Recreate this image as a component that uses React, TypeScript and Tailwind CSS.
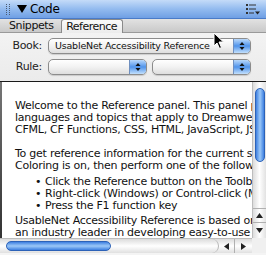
import React from "react";

const font = { fontFamily: '"DejaVu Sans", Verdana, sans-serif' };

function Arrows() {
  return (
    <svg width="6" height="10" viewBox="0 0 6 10">
      <path d="M3 1 L5.5 4 L0.5 4 Z" fill="#111" />
      <path d="M3 9 L5.5 6 L0.5 6 Z" fill="#111" />
    </svg>
  );
}

function AquaSelect({ label, className }: { label?: string; className: string }) {
  return (
    <div
      className={`h-[16px] flex rounded-[5px] border border-[#8c8c8c] bg-gradient-to-b from-white via-[#f2f2f2] to-[#dedede] overflow-hidden shadow-[0_1px_1px_rgba(0,0,0,0.15)] ${className}`}
    >
      <div className="flex-1 pl-[6px] text-[9.5px] leading-[14px] text-[#111] tracking-[-0.2px] whitespace-nowrap overflow-hidden">
        {label}
      </div>
      <div className="w-[17px] flex items-center justify-center border-l border-[#6f8fbf] bg-gradient-to-b from-[#b9d8fa] via-[#4f93ea] to-[#c3e0fc]">
        <Arrows />
      </div>
    </div>
  );
}

const para1 = [
  "Welcome to the Reference panel. This panel provides",
  "languages and topics that apply to Dreamweaver",
  "CFML, CF Functions, CSS, HTML, JavaScript, JSP",
];
const para2 = [
  "To get reference information for the current selection",
  "Coloring is on, then perform one of the following:",
];
const bullets = [
  "Click the Reference button on the Toolbar",
  "Right-click (Windows) or Control-click (Macintosh)",
  "Press the F1 function key",
];
const para3 = [
  "UsableNet Accessibility Reference is based on material",
  "an industry leader in developing easy-to-use software",
];

export default function App() {
  return (
    <div className="relative w-[266px] h-[255px] overflow-hidden bg-[#ececec] flex flex-col text-black" style={font}>
      {/* title bar */}
      <div className="h-[19px] flex items-center bg-gradient-to-b from-[#c4dbf8] via-[#93bbef] to-[#6f9fe4] border-b border-[#4a7bc8]">
        <div className="ml-[6px] flex gap-[2px]">
          <div className="w-[1px] h-[11px] border-l border-dotted border-[#4a5a70]" />
          <div className="w-[1px] h-[11px] border-l border-dotted border-[#4a5a70]" />
        </div>
        <svg className="ml-[7px]" width="10" height="8" viewBox="0 0 10 8">
          <path d="M0 0 L10 0 L5 8 Z" fill="#000" />
        </svg>
        <span className="ml-[3px] text-[12px] leading-[18px] tracking-[-0.3px]">Code</span>
        <div className="ml-auto mr-[6px]">
          <svg width="14" height="11" viewBox="0 0 14 11">
            <rect x="0" y="0" width="2" height="2" fill="#333" />
            <rect x="3" y="0.5" width="7" height="1" fill="#333" />
            <rect x="0" y="4" width="2" height="2" fill="#333" />
            <rect x="3" y="4.5" width="7" height="1" fill="#333" />
            <rect x="0" y="8" width="2" height="2" fill="#333" />
            <rect x="3" y="8.5" width="5" height="1" fill="#333" />
            <path d="M9 7.5 L14 7.5 L11.5 10.5 Z" fill="#222" />
          </svg>
        </div>
      </div>

      {/* tabs */}
      <div className="h-[14px] flex items-end bg-gradient-to-b from-[#e2e2e2] to-[#c9c9c9] border-b border-[#9a9a9a]">
        <div className="ml-[9px] text-[11px] leading-[13px] tracking-[-0.4px] text-[#111]">Snippets</div>
        <div className="ml-[7px] w-[62px] h-[14px] -mb-[1px] rounded-t-[3px] border border-b-0 border-[#8a8a8a] bg-gradient-to-b from-[#fafafa] to-[#ececec] text-center text-[11px] leading-[13px] tracking-[-0.5px] text-[#111]">
          Reference
        </div>
      </div>

      {/* selects */}
      <div className="h-[48px] flex flex-col gap-[4px] pt-[5px] bg-gradient-to-b from-[#f3f3f3] to-[#ebebeb]">
        <div className="flex items-center">
          <span className="w-[42px] text-right text-[11px] tracking-[-0.3px] text-[#222]">Book:</span>
          <AquaSelect label="UsableNet Accessibility Reference" className="ml-[6px] w-[203px]" />
        </div>
        <div className="flex items-center">
          <span className="w-[42px] text-right text-[11px] tracking-[-0.3px] text-[#222]">Rule:</span>
          <AquaSelect className="ml-[6px] w-[99px]" />
          <AquaSelect className="ml-[5px] w-[99px]" />
        </div>
      </div>

      {/* content + vertical scroller */}
      <div className="flex h-[157px] border-t border-[#1a1a1a]">
        <div className="w-[2px] bg-gradient-to-b from-[#777] to-[#333]" />
        <div className="w-[250px] bg-white overflow-hidden pt-[18px] pl-[13px] text-[11px] leading-[12px] tracking-[-0.25px] text-[#111]">
          {para1.map((l) => (
            <div key={l} className="whitespace-nowrap">{l}</div>
          ))}
          <div className="h-[12px]" />
          {para2.map((l) => (
            <div key={l} className="whitespace-nowrap">{l}</div>
          ))}
          <div className="mt-[4px] mb-[3px] pl-[20px]">
            {bullets.map((l) => (
              <div key={l} className="flex whitespace-nowrap">
                <span className="w-[10px] shrink-0">•</span>
                <span className="shrink-0">{l}</span>
              </div>
            ))}
          </div>
          {para3.map((l) => (
            <div key={l} className="whitespace-nowrap">{l}</div>
          ))}
        </div>
        <div className="w-[14px] flex flex-col bg-gradient-to-r from-[#dcdcdc] via-white to-[#e2e2e2] border-l border-[#bdbdbd]">
          <div className="flex-1 pt-[6px]">
            <div className="mx-auto w-[10px] h-[74px] rounded-full border border-[#2c62b8] bg-gradient-to-r from-[#3d7fe0] via-[#9cc8f7] to-[#3d7fe0]" />
          </div>
          <div className="h-[14px] flex items-center justify-center border-t border-[#b0b0b0]">
            <svg width="7" height="5" viewBox="0 0 7 5"><path d="M3.5 0 L7 5 L0 5 Z" fill="#222" /></svg>
          </div>
          <div className="h-[16px] flex items-center justify-center border-t border-[#b0b0b0]">
            <svg width="7" height="5" viewBox="0 0 7 5"><path d="M0 0 L7 0 L3.5 5 Z" fill="#222" /></svg>
          </div>
        </div>
      </div>

      {/* horizontal scroller */}
      <div className="h-[15px] flex">
        <div className="w-[252px] flex bg-gradient-to-b from-[#dcdcdc] via-white to-[#e0e0e0] border-t border-[#bdbdbd]">
          <div className="w-[219px] pl-[6px] pt-[2px] rounded-r-[7px] border-r border-[#b5b5b5]">
            <div className="w-[105px] h-[10px] rounded-full border border-[#2c62b8] bg-gradient-to-b from-[#3d7fe0] via-[#9cc8f7] to-[#3d7fe0]" />
          </div>
          <div className="w-[16px] flex items-center justify-center border-r border-[#b0b0b0]">
            <svg width="5" height="7" viewBox="0 0 5 7"><path d="M0 3.5 L5 0 L5 7 Z" fill="#222" /></svg>
          </div>
          <div className="w-[16px] flex items-center justify-center">
            <svg width="5" height="7" viewBox="0 0 5 7"><path d="M5 3.5 L0 0 L0 7 Z" fill="#222" /></svg>
          </div>
        </div>
        <div className="flex-1 bg-[#f0f0f0]" />
      </div>
      <div className="flex-1 bg-[#f4f4f4]" />

      {/* mouse cursor */}
      <svg className="absolute left-[213px] top-[32px]" width="12" height="18" viewBox="0 0 12 18">
        <path d="M1 1 L1 14 L4 11 L6.5 16.5 L8.5 15.5 L6 10 L10.5 10 Z" fill="#000" stroke="#fff" strokeWidth="1" />
      </svg>
    </div>
  );
}
